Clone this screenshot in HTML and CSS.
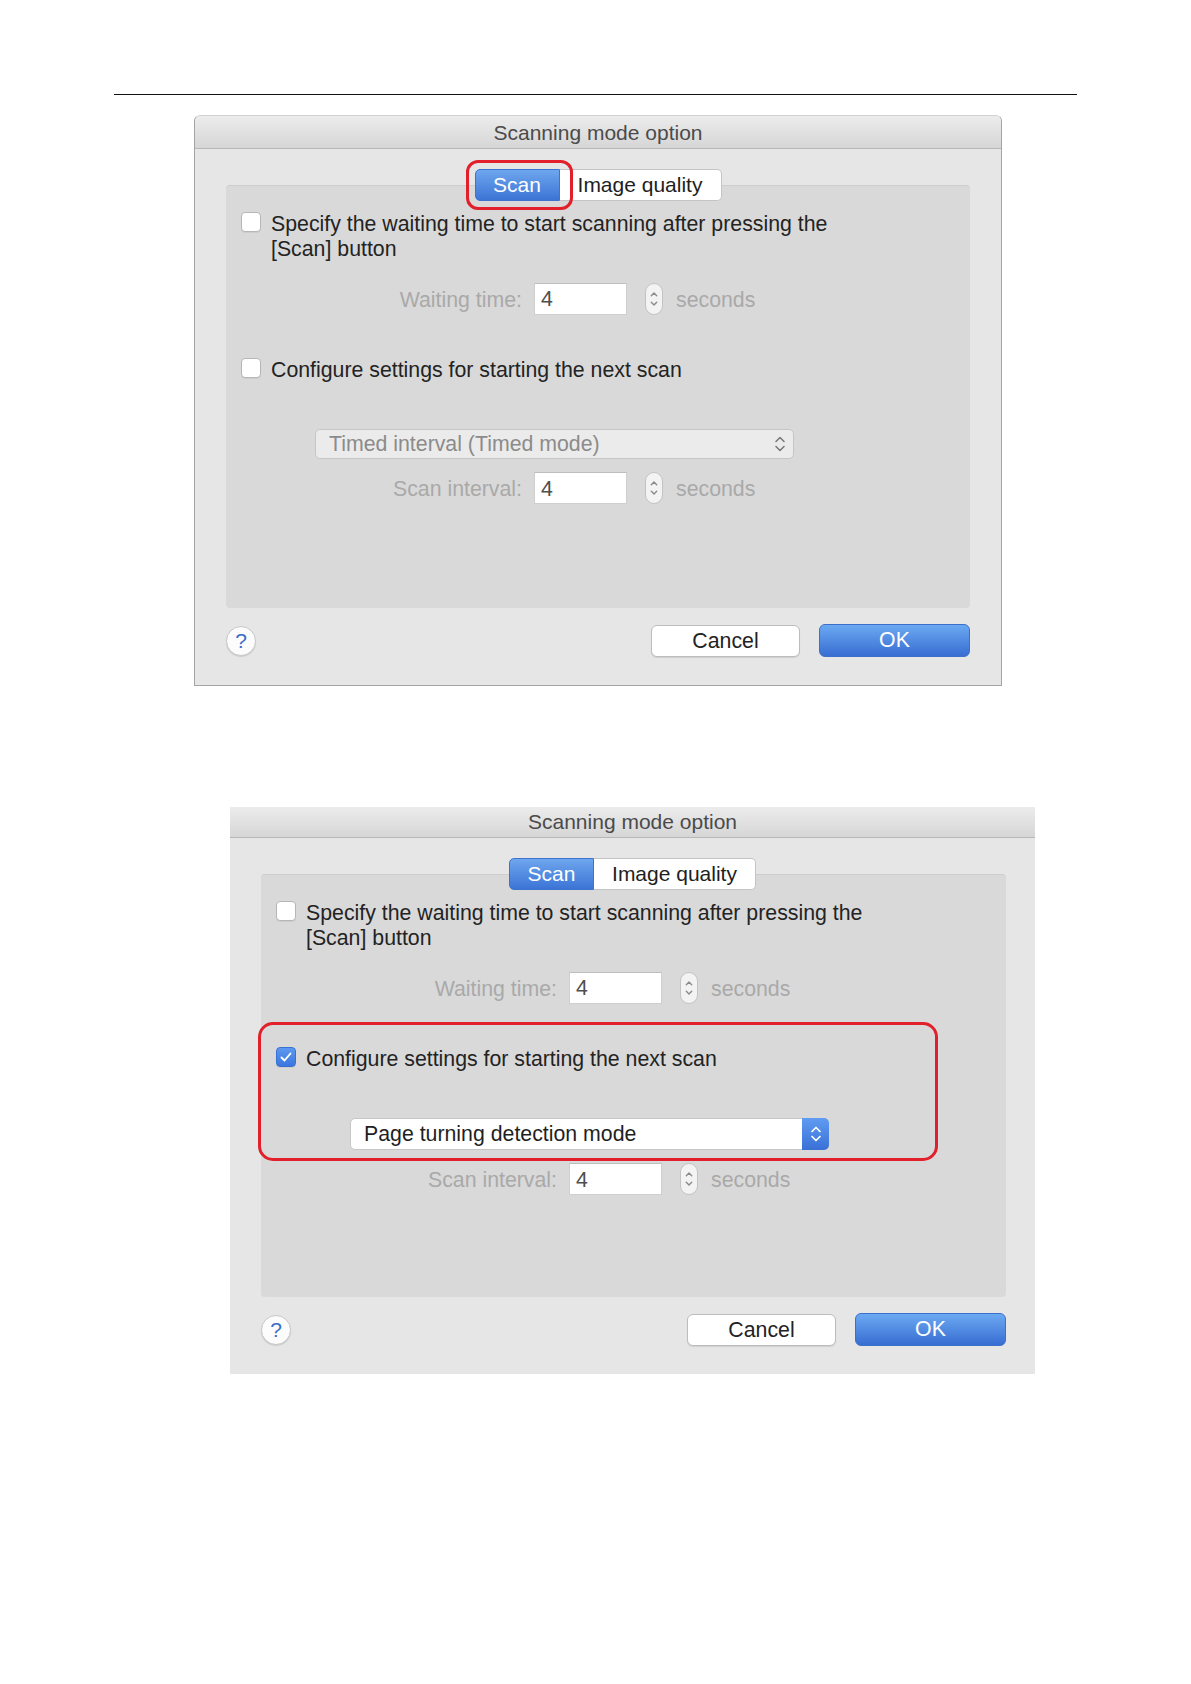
FILE: index.html
```html
<!DOCTYPE html>
<html lang="en">
<head>
<meta charset="utf-8">
<title>Scanning mode option</title>
<link rel="stylesheet" href="styles.css">
</head>
<body>
<div class="page">
  <div class="rule"></div>

  <div class="dialog dialog--framed dialog--first">
    <div class="titlebar">Scanning mode option</div>
    <div class="tabs">
      <div class="seg">
        <div class="tab tab--active">Scan</div>
        <div class="tab tab--plain">Image quality</div>
        <span class="callout callout--tab"></span>
      </div>
    </div>
    <div class="panel">
      <div class="option">
        <span class="check"></span>
        <span class="option-text">Specify the waiting time to start scanning after pressing the<br>[Scan] button</span>
      </div>
      <div class="field field--first">
        <span class="field-label">Waiting time:</span>
        <span class="input">4</span>
        <span class="stepper"><svg width="8" height="20" viewBox="0 0 8 20"><path d="M1.3 6.8L4 4.1l2.7 2.7M1.3 13.2L4 15.9l2.7-2.7" fill="none" stroke="#8a8a8a" stroke-width="1.4" stroke-linecap="round" stroke-linejoin="round"/></svg></span>
        <span class="unit">seconds</span>
      </div>
      <div class="option option--second">
        <span class="check"></span>
        <span class="option-text">Configure settings for starting the next scan</span>
      </div>
      <div class="select select--disabled">
        <span class="select-text">Timed interval (Timed mode)</span>
        <span class="select-arrow"><svg width="12" height="20" viewBox="0 0 12 20"><path d="M2 7.5L6 3.5l4 4M2 12.5l4 4 4-4" fill="none" stroke="#7a7a7a" stroke-width="1.6" stroke-linecap="round" stroke-linejoin="round"/></svg></span>
      </div>
      <div class="field field--interval">
        <span class="field-label">Scan interval:</span>
        <span class="input input--low">4</span>
        <span class="stepper"><svg width="8" height="20" viewBox="0 0 8 20"><path d="M1.3 6.8L4 4.1l2.7 2.7M1.3 13.2L4 15.9l2.7-2.7" fill="none" stroke="#8a8a8a" stroke-width="1.4" stroke-linecap="round" stroke-linejoin="round"/></svg></span>
        <span class="unit">seconds</span>
      </div>
    </div>
    <div class="footer">
      <span class="help">?</span>
      <span class="spacer"></span>
      <span class="btn btn--cancel">Cancel</span>
      <span class="btn btn--ok">OK</span>
    </div>
  </div>

  <div class="dialog dialog--second">
    <div class="titlebar">Scanning mode option</div>
    <div class="tabs">
      <div class="seg">
        <div class="tab tab--active">Scan</div>
        <div class="tab tab--plain">Image quality</div>
      </div>
    </div>
    <div class="panel">
      <div class="option">
        <span class="check"></span>
        <span class="option-text">Specify the waiting time to start scanning after pressing the<br>[Scan] button</span>
      </div>
      <div class="field field--first">
        <span class="field-label">Waiting time:</span>
        <span class="input">4</span>
        <span class="stepper"><svg width="8" height="20" viewBox="0 0 8 20"><path d="M1.3 6.8L4 4.1l2.7 2.7M1.3 13.2L4 15.9l2.7-2.7" fill="none" stroke="#8a8a8a" stroke-width="1.4" stroke-linecap="round" stroke-linejoin="round"/></svg></span>
        <span class="unit">seconds</span>
      </div>
      <div class="option option--second">
        <span class="check check--on"><svg width="14" height="14" viewBox="0 0 14 14"><path d="M2.5 7.5l3 3 6-7" fill="none" stroke="#fff" stroke-width="1.9" stroke-linecap="round" stroke-linejoin="round"/></svg></span>
        <span class="option-text">Configure settings for starting the next scan</span>
      </div>
      <div class="select select--active">
        <span class="select-text">Page turning detection mode</span>
        <span class="select-arrow"><svg width="12" height="20" viewBox="0 0 12 20"><path d="M2 7.5L6 3.5l4 4M2 12.5l4 4 4-4" fill="none" stroke="#fff" stroke-width="1.7" stroke-linecap="round" stroke-linejoin="round"/></svg></span>
      </div>
      <div class="field field--interval">
        <span class="field-label">Scan interval:</span>
        <span class="input input--low">4</span>
        <span class="stepper"><svg width="8" height="20" viewBox="0 0 8 20"><path d="M1.3 6.8L4 4.1l2.7 2.7M1.3 13.2L4 15.9l2.7-2.7" fill="none" stroke="#8a8a8a" stroke-width="1.4" stroke-linecap="round" stroke-linejoin="round"/></svg></span>
        <span class="unit">seconds</span>
      </div>
      <span class="callout callout--group"></span>
    </div>
    <div class="footer">
      <span class="help">?</span>
      <span class="spacer"></span>
      <span class="btn btn--cancel">Cancel</span>
      <span class="btn btn--ok">OK</span>
    </div>
  </div>
</div>
</body>
</html>
```

FILE: styles.css
```css
body {
  margin: 0;
  background: #fff;
  font-family: "Liberation Sans", Arial, sans-serif;
  color: #222;
}

.page {
  padding-top: 94px;
  padding-bottom: 40px;
}

.rule {
  margin-left: 114px;
  width: 963px;
  height: 1px;
  background: #111;
}

/* ---------- dialog ---------- */
.dialog {
  width: 805px;
  box-sizing: border-box;
  padding-bottom: 28px;
  background: #e6e6e6;
}

.dialog--framed {
  width: 808px;
  border: 1px solid #a4a4a4;
  border-top-color: #d2d2d2;
  border-radius: 6px 6px 0 0;
}

.dialog--first {
  margin: 20px 0 0 194px;
}

.dialog--second {
  margin: 121px 0 0 230px;
}

.titlebar {
  height: 31px;
  box-sizing: border-box;
  border-bottom: 1px solid #b7b7b7;
  background: linear-gradient(#ececec, #d6d6d6);
  text-align: center;
  font-size: 21px;
  line-height: 30px;
  color: #4b4b4b;
}

.dialog--framed .titlebar {
  height: 33px;
  line-height: 34px;
  border-radius: 5px 5px 0 0;
}

/* ---------- tabs ---------- */
.tabs {
  display: flex;
  justify-content: center;
  margin-top: 20px;
  position: relative;
  z-index: 1;
}

.seg {
  display: flex;
  position: relative;
}

.tab {
  height: 32px;
  box-sizing: border-box;
  font-size: 21px;
  line-height: 30px;
  text-align: center;
}

.tab--active {
  width: 85px;
  background: linear-gradient(#6ea6ee, #3c74d6);
  border: 1px solid #3d72cf;
  border-radius: 5px 0 0 5px;
  color: #fff;
}

.tab--plain {
  width: 162px;
  background: #fff;
  border: 1px solid #c4c4c4;
  border-left: none;
  border-radius: 0 5px 5px 0;
  color: #1e1e1e;
}

/* ---------- panel ---------- */
.panel {
  position: relative;
  margin: -16px 29px 0 31px;
  height: 423px;
  box-sizing: border-box;
  background: #d9d9d9;
  border-top: 1px solid #cdcdcd;
  border-radius: 4px;
  padding: 25px 0 0 15px;
}

.dialog--framed .panel {
  margin-right: 31px;
}

.option {
  display: flex;
  align-items: flex-start;
  gap: 10px;
  font-size: 21.3px;
  line-height: 25px;
  color: #232323;
}

.option-text {
  padding-top: 1px;
}

.option--second {
  margin-top: 42px;
}

.check {
  flex: none;
  width: 20px;
  height: 20px;
  margin-top: 1px;
  box-sizing: border-box;
  background: #fff;
  border: 1px solid #b6b6b6;
  border-radius: 4px;
  box-shadow: 0 1px 0 rgba(0, 0, 0, 0.05);
}

.check--on {
  display: flex;
  align-items: center;
  justify-content: center;
  background: linear-gradient(#5c99f0, #3a76de);
  border-color: #3a70d2;
}

.field {
  display: flex;
  align-items: center;
  height: 32px;
  font-size: 21.3px;
}

.field--first {
  margin-top: 21px;
}

.field--interval {
  margin-top: 13px;
}

.field-label {
  width: 281px;
  margin-right: 12px;
  text-align: right;
  color: #a9a9a9;
  padding-top: 2px;
}

.unit {
  margin-left: 13px;
  color: #a9a9a9;
  padding-top: 2px;
}

.input {
  width: 93px;
  height: 32px;
  box-sizing: border-box;
  padding-left: 6px;
  background: #fff;
  border: 1px solid #cfcfcf;
  border-top-color: #bebebe;
  line-height: 30px;
  color: #4f4f4f;
}

.input--low {
  line-height: 32px;
}

.stepper {
  width: 18px;
  height: 32px;
  margin-left: 18px;
  box-sizing: border-box;
  display: flex;
  align-items: center;
  justify-content: center;
  background: #f3f3f3;
  border: 1px solid #c3c3c3;
  border-radius: 9px;
}

.select {
  display: flex;
  margin: 46px 0 0 74px;
  width: 479px;
  height: 32px;
  box-sizing: border-box;
  border: 1px solid #c6c6c6;
  border-radius: 5px;
  font-size: 21.3px;
  line-height: 30px;
}

.select-text {
  flex: 1;
  padding-left: 13px;
}

.select-arrow {
  width: 26px;
  display: flex;
  align-items: center;
  justify-content: center;
}

.select--disabled {
  height: 30px;
  line-height: 28px;
  background: #ebebeb;
  color: #8b8b8b;
}

.select--active {
  background: #fff;
  color: #1f1f1f;
}

.select--active .select-arrow {
  margin: -1px -1px -1px 0;
  width: 27px;
  background: linear-gradient(#5f9cf1, #3a70d6);
  border-radius: 0 5px 5px 0;
}

/* ---------- red callouts ---------- */
.callout {
  position: absolute;
  box-sizing: border-box;
  border: 3px solid #e2202b;
  pointer-events: none;
}

.callout--tab {
  left: -9px;
  top: -9px;
  width: 107px;
  height: 50px;
  border-radius: 12px;
}

.callout--group {
  left: -3px;
  top: 147px;
  width: 680px;
  height: 139px;
  border-radius: 15px;
}

/* ---------- footer ---------- */
.footer {
  display: flex;
  align-items: center;
  height: 33px;
  margin: 16px 29px 0 31px;
}

.dialog--framed .footer {
  margin-right: 31px;
}

.help {
  width: 30px;
  height: 30px;
  box-sizing: border-box;
  display: flex;
  align-items: center;
  justify-content: center;
  border-radius: 50%;
  background: #fcfcfc;
  border: 1px solid #c8c8c8;
  box-shadow: 0 1px 1px rgba(0, 0, 0, 0.12);
  color: #3a6cc8;
  font-size: 21px;
}

.spacer {
  flex: 1;
}

.btn {
  height: 32px;
  box-sizing: border-box;
  border-radius: 6px;
  font-size: 21.3px;
  line-height: 30px;
  text-align: center;
}

.btn--cancel {
  width: 149px;
  margin-right: 19px;
  background: #fff;
  border: 1px solid #bdbdbd;
  box-shadow: 0 1px 1px rgba(0, 0, 0, 0.1);
  color: #222;
}

.btn--ok {
  width: 151px;
  height: 33px;
  background: linear-gradient(#6ba9f2, #386dd2);
  border: 1px solid #3c6fcb;
  color: #fff;
}
```
